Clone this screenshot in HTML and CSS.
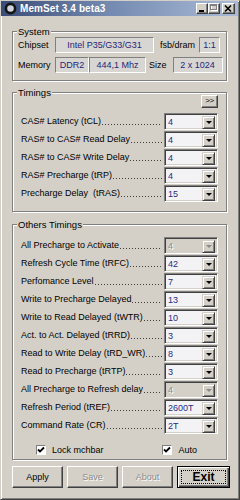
FILE: index.html
```html
<!DOCTYPE html>
<html>
<head>
<meta charset="utf-8">
<link rel="stylesheet" href="styles.css">
</head>
<body>
<div class="window">
  <div class="titlebar">
    <svg class="appicon" width="13" height="13" viewBox="0 0 13 13"><circle cx="6.5" cy="6.5" r="4.6" fill="#cfd3dc" stroke="#151515" stroke-width="2.6"/></svg>
    <span class="title">MemSet 3.4 beta3</span>
    <div class="tbtns">
      <span class="tbtn"><svg width="10" height="9" viewBox="0 0 10 9"><rect x="2" y="6" width="5" height="2" fill="#000"/></svg></span>
      <span class="tbtn"><svg width="10" height="9" viewBox="0 0 10 9"><rect x="2.5" y="1.5" width="6" height="5" fill="none" stroke="#fff"/><rect x="1.5" y="0.5" width="6" height="5" fill="none" stroke="#808080"/><rect x="1.5" y="1" width="6" height="1" fill="#808080"/></svg></span>
      <span class="tbtn close"><svg width="11" height="9" viewBox="0 0 11 9"><path d="M2 1.5 L8 7.5 M8 1.5 L2 7.5" stroke="#000" stroke-width="1.6"/></svg></span>
    </div>
  </div>
  <div class="client">
    <fieldset class="group sys">
      <legend>System</legend>
      <div class="inner">
        <div class="srow">
          <span class="slbl">Chipset</span>
          <span class="field f-chip">Intel P35/G33/G31</span>
          <span class="slbl l-fsb">fsb/dram</span>
          <span class="field f-ratio">1:1</span>
        </div>
        <div class="srow">
          <span class="slbl">Memory</span>
          <span class="field f-ddr">DDR2</span>
          <span class="field f-mhz">444,1 Mhz</span>
          <span class="slbl l-size">Size</span>
          <span class="field f-size">2 x 1024</span>
        </div>
      </div>
    </fieldset>

    <fieldset class="group tim">
      <legend>Timings</legend>
      <div class="inner">
        <div class="morerow"><span class="more">&gt;&gt;</span></div>
        <div class="trow"><span class="lab">CAS# Latency (tCL)</span><span class="lead"></span><span class="sel"><span class="val">4</span><span class="dd"></span></span></div>
        <div class="trow"><span class="lab">RAS# to CAS# Read Delay</span><span class="lead"></span><span class="sel"><span class="val">4</span><span class="dd"></span></span></div>
        <div class="trow"><span class="lab">RAS# to CAS# Write Delay</span><span class="lead"></span><span class="sel"><span class="val">4</span><span class="dd"></span></span></div>
        <div class="trow"><span class="lab">RAS# Precharge (tRP)</span><span class="lead"></span><span class="sel"><span class="val">4</span><span class="dd"></span></span></div>
        <div class="trow"><span class="lab">Precharge Delay&nbsp; (tRAS)</span><span class="lead"></span><span class="sel"><span class="val">15</span><span class="dd"></span></span></div>
      </div>
    </fieldset>

    <fieldset class="group oth">
      <legend>Others Timings</legend>
      <div class="inner">
        <div class="trow"><span class="lab">All Precharge to Activate</span><span class="lead"></span><span class="sel dis"><span class="val">4</span><span class="dd"></span></span></div>
        <div class="trow"><span class="lab">Refresh Cycle Time (tRFC)</span><span class="lead"></span><span class="sel"><span class="val">42</span><span class="dd"></span></span></div>
        <div class="trow"><span class="lab">Perfomance Level</span><span class="lead"></span><span class="sel"><span class="val">7</span><span class="dd"></span></span></div>
        <div class="trow"><span class="lab">Write to Precharge Delayed</span><span class="lead"></span><span class="sel"><span class="val">13</span><span class="dd"></span></span></div>
        <div class="trow"><span class="lab">Write to Read Delayed (tWTR)</span><span class="lead"></span><span class="sel"><span class="val">10</span><span class="dd"></span></span></div>
        <div class="trow"><span class="lab">Act. to Act. Delayed (tRRD)</span><span class="lead"></span><span class="sel"><span class="val">3</span><span class="dd"></span></span></div>
        <div class="trow"><span class="lab">Read to Write Delay (tRD_WR)</span><span class="lead"></span><span class="sel"><span class="val">8</span><span class="dd"></span></span></div>
        <div class="trow"><span class="lab">Read to Precharge (tRTP)</span><span class="lead"></span><span class="sel"><span class="val">3</span><span class="dd"></span></span></div>
        <div class="trow"><span class="lab">All Precharge to Refresh delay</span><span class="lead"></span><span class="sel dis"><span class="val">4</span><span class="dd"></span></span></div>
        <div class="trow"><span class="lab">Refresh Period (tREF)</span><span class="lead"></span><span class="sel"><span class="val">2600T</span><span class="dd"></span></span></div>
        <div class="trow"><span class="lab">Command Rate (CR)</span><span class="lead"></span><span class="sel"><span class="val">2T</span><span class="dd"></span></span></div>
        <div class="chkrow">
          <span class="chk c-lock"><span class="box"><svg width="8" height="8" viewBox="0 0 8 8"><path d="M1 3.5 L3 5.5 L7 1.5" fill="none" stroke="#000" stroke-width="1.8"/></svg></span>Lock mchbar</span>
          <span class="chk c-auto"><span class="box"><svg width="8" height="8" viewBox="0 0 8 8"><path d="M1 3.5 L3 5.5 L7 1.5" fill="none" stroke="#000" stroke-width="1.8"/></svg></span>Auto</span>
        </div>
      </div>
    </fieldset>

    <div class="btnrow">
      <span class="btn">Apply</span>
      <span class="btn off">Save</span>
      <span class="btn off">About</span>
      <span class="btn def"><span class="focus">Exit</span></span>
    </div>
  </div>
</div>
</body>
</html>
```
FILE: styles.css
```css
* { box-sizing: border-box; }
html, body { margin: 0; padding: 0; }
body {
  width: 240px;
  height: 500px;
  overflow: hidden;
  background: #d4d0c8;
  font-family: "Liberation Sans", Arial, sans-serif;
  font-size: 9px;
  color: #000;
}
.window {
  width: 240px;
  height: 500px;
  background: #d4d0c8;
  border: 1px solid;
  border-color: #d4d0c8 #404040 #404040 #d4d0c8;
  box-shadow: inset 1px 1px 0 #fff, inset -1px -1px 0 #808080;
}
.titlebar {
  height: 15px;
  margin: 0 1px 0 0;
  display: flex;
  align-items: center;
  background: linear-gradient(90deg, #3a4d78 0%, #7489b0 45%, #a9bbd6 100%);
  color: #fff;
}
.appicon { margin: 0 3px 0 3px; flex: none; }
.title {
  font-weight: bold;
  font-size: 10px;
  letter-spacing: 0.1px;
  flex: 1;
}
.tbtns { display: flex; align-items: center; margin-right: 3px; }
.tbtn {
  width: 12px;
  height: 11px;
  background: #d4d0c8;
  border: 1px solid;
  border-color: #fff #404040 #404040 #fff;
  box-shadow: inset -1px -1px 0 #808080;
  display: flex;
  align-items: center;
  justify-content: center;
}
.tbtn.close { width: 13px; margin-left: 2px; }

.client { padding: 10px 0 0 11px; }

.group {
  width: 215px;
  min-width: 0;
  min-inline-size: 0;
  margin: 0;
  padding: 0;
  border: 1px solid #808080;
  box-shadow: inset 1px 1px 0 #fff, 1px 1px 0 #fff;
}
.group legend {
  margin-left: 4px;
  padding: 0 1px;
  line-height: 11px;
  font-size: 9.5px;
  background: #d4d0c8;
}
.sys .inner { padding: 0 7px 7px 5px; }
.srow { display: flex; align-items: center; height: 16px; }
.srow + .srow { margin-top: 4px; }
.slbl { width: 37px; flex: none; white-space: nowrap; }
.field {
  height: 16px;
  flex: none;
  border: 1px solid;
  border-color: #808080 #fff #fff #808080;
  background: #d8d6d2;
  color: #262678;
  text-align: center;
  line-height: 14px;
  white-space: nowrap;
}
.f-chip { width: 99px; }
.l-fsb { width: auto; margin-left: 6px; margin-right: 4px; }
.f-ratio { width: 21px; }
.f-ddr { width: 34px; }
.f-mhz { width: 57px; }
.l-size { width: auto; margin-left: 3px; margin-right: 6px; }
.f-size { width: 50px; }

.tim { margin-top: 6px; }
.tim .inner { padding: 0 8px 9px 8px; }
.morerow { display: flex; justify-content: flex-end; margin-top: -3px; margin-bottom: 4px; padding-right: 0; }
.more {
  width: 17px;
  height: 13px;
  border: 1px solid;
  border-color: #fff #404040 #404040 #fff;
  box-shadow: inset -1px -1px 0 #808080;
  font-size: 8px;
  line-height: 10px;
  text-align: center;
  letter-spacing: -0.5px;
}
.trow { display: flex; align-items: center; height: 18px; }
.lab {
  flex: none;
  white-space: nowrap;
}
.lead {
  flex: 1;
  min-width: 0;
  height: 1px;
  align-self: flex-end;
  margin: 0 2px 5px 1px;
  background: repeating-linear-gradient(90deg, #404040 0 1px, transparent 1px 3px);
}
.sel {
  width: 54px;
  height: 17px;
  flex: none;
  display: flex;
  border: 1px solid;
  border-color: #808080 #fff #fff #808080;
  box-shadow: inset 1px 1px 0 #404040, inset -1px -1px 0 #d4d0c8;
  background: #f3f3f5;
  padding: 2px;
}
.val {
  flex: 1;
  color: #2a2a86;
  padding-left: 1px;
  line-height: 13px;
  font-size: 9px;
}
.dd {
  width: 13px;
  height: 13px;
  flex: none;
  background: #d4d0c8;
  border: 1px solid;
  border-color: #d4d0c8 #404040 #404040 #d4d0c8;
  box-shadow: inset 1px 1px 0 #fff, inset -1px -1px 0 #808080;
  position: relative;
}
.dd::after {
  content: "";
  position: absolute;
  left: 3px;
  top: 4px;
  border-left: 3px solid transparent;
  border-right: 3px solid transparent;
  border-top: 3px solid #000;
}
.sel.dis { background: #d4d0c8; }
.sel.dis .val { color: #8a8a8a; text-shadow: 1px 1px 0 #fff; }
.sel.dis .dd::after { border-top-color: #8a8a8a; }

.oth { margin-top: 7px; }
.oth .inner { padding: 6px 8px 3px 8px; }
.chkrow { display: flex; align-items: center; height: 13px; margin-top: 9px; }
.chk { display: flex; align-items: center; white-space: nowrap; }
.c-lock { margin-left: 15px; }
.c-auto { margin-left: auto; margin-right: 21px; }
.box {
  width: 10px;
  height: 10px;
  margin-right: 6px;
  border: 1px solid;
  border-color: #808080 #fff #fff #808080;
  background: #fff;
  display: flex;
  align-items: center;
  justify-content: center;
}

.btnrow { display: flex; gap: 4px; margin-top: 6px; margin-left: 0; }
.btn {
  width: 51px;
  height: 22px;
  display: flex;
  align-items: center;
  justify-content: center;
  border: 1px solid;
  border-color: #fff #404040 #404040 #fff;
  box-shadow: inset -1px -1px 0 #808080;
  font-size: 9px;
}
.btn.off { color: #8a8a8a; text-shadow: 1px 1px 0 #fff; }
.btn.def {
  width: 53px;
  border: 1px solid #000;
  box-shadow: inset 1px 1px 0 #fff, inset -1px -1px 0 #404040, inset -2px -2px 0 #808080;
  padding: 3px;
}
.focus {
  flex: 1;
  align-self: stretch;
  border: 1px dotted #000;
  display: flex;
  align-items: center;
  justify-content: center;
  font-weight: bold;
  font-size: 12px;
}
```
